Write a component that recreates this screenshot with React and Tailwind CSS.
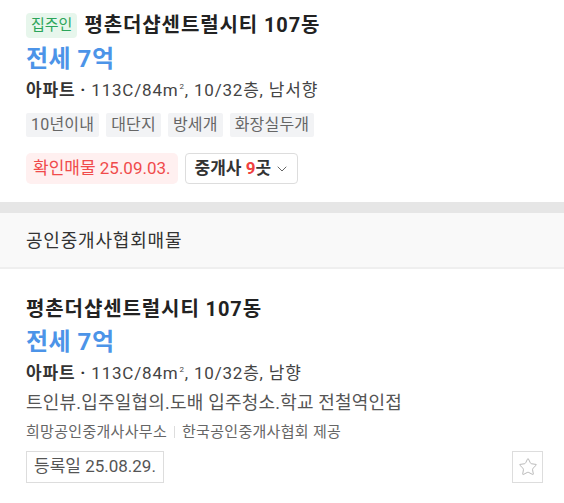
import { ChevronDown, Star } from "lucide-react";

const font = { fontFamily: "Roboto, 'Noto Sans CJK KR', sans-serif" };

function Tag({ children }) {
  return (
    <span className="h-6 px-[5px] flex items-center bg-[#f2f3f5] text-[#666] text-[16px] tracking-[0.2px] rounded-[2px]">
      {children}
    </span>
  );
}

function Sq() {
  return <sup className="text-[8px] top-[-7px] ml-[1px]">2</sup>;
}

export default function App() {
  const tags = ["10년이내", "대단지", "방세개", "화장실두개"];

  return (
    <div className="w-[564px] bg-white text-[#222]" style={font}>
      {/* 첫번째 매물 */}
      <div className="px-[26px] pt-[13px] pb-[18px]">
        <div className="flex items-center gap-[7px] h-[25px]">
          <span className="h-[25px] px-[5px] flex items-center rounded-[4px] bg-[#e7f6ec] text-[#2ca55a] text-[15px]">
            집주인
          </span>
          <h3 className="text-[20px] font-bold tracking-[0.9px] leading-[25px]">평촌더샵센트럴시티 107동</h3>
        </div>
        <div className="mt-[6px] text-[24px] font-bold text-[#4c94e8] leading-[30px] tracking-[0.5px]">전세 7억</div>
        <div className="mt-[5px] text-[17px] text-[#444] leading-[22px] tracking-[0.8px]">
          <b className="font-bold text-[#333]">아파트 ·</b> 113C/84m<Sq />, 10/32층, 남서향
        </div>
        <div className="mt-[12px] flex gap-[7px]">
          {tags.map((t) => (
            <Tag key={t}>{t}</Tag>
          ))}
        </div>
        <div className="mt-4 flex gap-[7px]">
          <span className="h-[31px] px-[7px] flex items-center rounded-[5px] bg-[#fff0f0] text-[#f04b4b] text-[17px]">
            확인매물 25.09.03.
          </span>
          <button className="h-[31px] pl-[9px] pr-[7px] flex items-center gap-[3px] rounded-[4px] border border-[#ddd] text-[17px] font-bold text-[#333]">
            <span>
              중개사 <span className="text-[#f04040]">9</span>곳
            </span>
            <ChevronDown className="w-4 h-4 text-[#666]" strokeWidth={1.5} />
          </button>
        </div>
      </div>

      {/* 구분 */}
      <div className="h-[11px] bg-[#e6e6e6]" />
      <div className="h-[56px] px-[26px] flex items-center bg-[#f9f9f9] border-b-2 border-[#efefef] text-[18px] text-[#333] tracking-[0.8px]">
        공인중개사협회매물
      </div>

      {/* 두번째 매물 */}
      <div className="px-[26px] pt-[28px] pb-[18px]">
        <h3 className="text-[20px] font-bold leading-[25px] tracking-[0.9px]">평촌더샵센트럴시티 107동</h3>
        <div className="mt-[5px] text-[24px] font-bold text-[#4c94e8] leading-[30px] tracking-[0.5px]">전세 7억</div>
        <div className="mt-[5px] text-[17px] text-[#444] leading-[22px] tracking-[0.8px]">
          <b className="font-bold text-[#333]">아파트 ·</b> 113C/84m<Sq />, 10/32층, 남향
        </div>
        <div className="mt-[7px] text-[18px] text-[#555] leading-[24px] tracking-[0.2px]">
          트인뷰.입주일협의.도배 입주청소.학교 전철역인접
        </div>
        <div className="mt-[7px] flex items-center text-[15px] text-[#666] leading-[20px] tracking-[0.3px]">
          희망공인중개사사무소
          <span className="mx-[7px] w-px h-[12px] bg-[#ddd]" />
          한국공인중개사협회 제공
        </div>
        <div className="mt-[9px] flex items-center justify-between">
          <span className="h-[32px] px-[7px] flex items-center border border-[#ddd] text-[17px] text-[#555]">
            등록일 25.08.29.
          </span>
          <button className="w-[31px] h-[32px] flex items-center justify-center border border-[#ddd] mr-[-5px]">
            <Star className="w-5 h-5 text-[#bbb]" strokeWidth={1.2} />
          </button>
        </div>
      </div>
    </div>
  );
}
